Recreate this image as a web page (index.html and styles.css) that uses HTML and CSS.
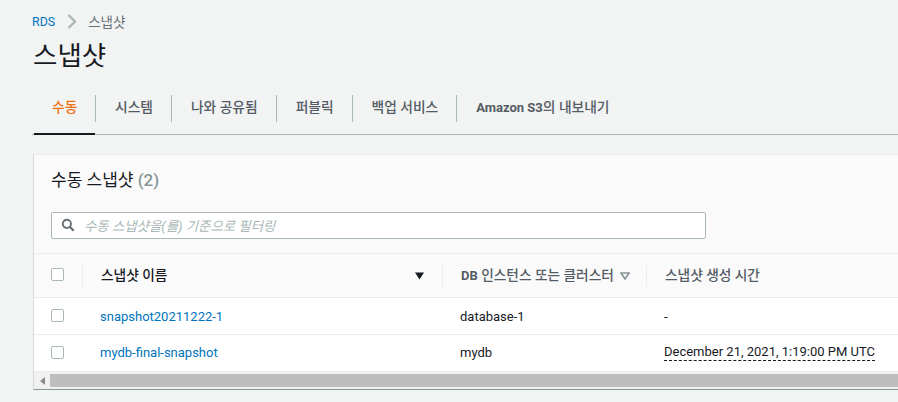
FILE: index.html
```html
<!DOCTYPE html>
<html lang="ko">
<head>
    <meta charset="UTF-8">
    <title>스냅샷</title>
    <link rel="stylesheet" href="styles.css">
</head>
<body>

<nav class="breadcrumb">
    <a href="#">RDS</a>
    <svg class="crumb-arrow" width="10" height="15" viewBox="0 0 10 15"><path d="M1.5 1l6.5 6.5-6.5 6.5" fill="none" stroke="#aab7b8" stroke-width="2.4"/></svg>
    <span>스냅샷</span>
</nav>

<h1 class="page-title">스냅샷</h1>

<div class="tabs">
    <div class="tab active"><span>수동</span></div>
    <div class="tab"><span>시스템</span></div>
    <div class="tab"><span>나와 공유됨</span></div>
    <div class="tab"><span>퍼블릭</span></div>
    <div class="tab"><span>백업 서비스</span></div>
    <div class="tab"><span><b>Amazon S3</b>의 내보내기</span></div>
</div>

<section class="card">
    <div class="card-head">
        <h2>수동 스냅샷 <span class="count">(2)</span></h2>
        <div class="filter">
            <svg width="14" height="14" viewBox="0 0 16 16"><circle cx="6.7" cy="6.7" r="4.7" fill="none" stroke="#687078" stroke-width="2.2"/><path d="M10.2 10.2l4.3 4.3" stroke="#687078" stroke-width="2.6"/></svg>
            <span>수동 스냅샷을(를) 기준으로 필터링</span>
        </div>
    </div>

    <div class="row row-head">
        <div class="cell cell-check"><i class="check"></i></div>
        <div class="cell cell-name">
            <span>스냅샷 이름</span>
            <svg width="9" height="8" viewBox="0 0 10 8"><path d="M0 0h10L5 8z" fill="#16191f"/></svg>
        </div>
        <div class="cell cell-db">
            <span><b>DB</b> 인스턴스 또는 클러스터</span>
            <svg width="10" height="8" viewBox="0 0 10 8"><path d="M1 1h8L5 7z" fill="none" stroke="#879596" stroke-width="1.6"/></svg>
        </div>
        <div class="cell cell-time"><span>스냅샷 생성 시간</span></div>
    </div>

    <div class="row">
        <div class="cell cell-check"><i class="check"></i></div>
        <div class="cell cell-name"><a href="#">snapshot20211222-1</a></div>
        <div class="cell cell-db">database-1</div>
        <div class="cell cell-time">-</div>
    </div>
    <div class="row row-last">
        <div class="cell cell-check"><i class="check"></i></div>
        <div class="cell cell-name"><a href="#">mydb-final-snapshot</a></div>
        <div class="cell cell-db">mydb</div>
        <div class="cell cell-time"><span class="dotted">December 21, 2021, 1:19:00 PM UTC</span></div>
    </div>

    <div class="scrollbar">
        <div class="scroll-left"><svg width="5" height="8" viewBox="0 0 5 8"><path d="M5 0v8L0 4z" fill="#8a8a8a"/></svg></div>
        <div class="scroll-thumb"></div>
    </div>
</section>

</body>
</html>
```

FILE: styles.css
```css
* {
    box-sizing: border-box;
}
body {
    margin: 0;
    height: 402px;
    padding: 13px 0 0 32px;
    overflow: hidden;
    background-color: #f2f3f3;
    color: #16191f;
    font-family: Roboto, "Noto Sans CJK KR", sans-serif;
    font-size: 13px;
}
a {
    color: #0073bb;
    text-decoration: none;
}
.breadcrumb {
    display: flex;
    align-items: center;
    gap: 12px;
    height: 16px;
    font-size: 13.5px;
    color: #687078;
}
.breadcrumb a {
    font-size: 12.4px;
}
.crumb-arrow {
    margin-right: -1px;
}
.page-title {
    margin: 10px 0 0 1px;
    font-size: 26.5px;
    font-weight: 400;
    line-height: 34px;
}
.tabs {
    display: flex;
    height: 40px;
    margin-top: 22px;
    border-bottom: 1px solid #aab7b8;
    font-size: 13.75px;
    white-space: nowrap;
}
.tab {
    height: 39px;
    font-weight: 500;
    color: #545b64;
}
.tab span {
    display: block;
    height: 27px;
    padding: 0 18px 0 19px;
    line-height: 25px;
    border-left: 1px solid #aab7b8;
}
.tab b {
    font-size: 13px;
    font-weight: 700;
}
.tab.active {
    width: 61px;
    height: 40px;
    margin: 0 0 -1px 2px;
    border-bottom: 2px solid #16191f;
    color: #ec7211;
}
.tab.active span {
    padding: 0 18px;
    border-left: none;
}
/* the card runs to the window edge, so it has no right border */
.card {
    height: 236px;
    margin: 19px 0 0 1px;
    border: 1px solid #eaeded;
    border-left-color: #d5dbdb;
    border-right: none;
    border-bottom: 1px solid #879596;
    background-color: #fafafa;
}
.card-head {
    height: 98px;
    padding: 13px 17px 0;
}
.card-head h2 {
    margin: 0;
    font-size: 17px;
    font-weight: 400;
    line-height: 24px;
}
.count {
    color: #879596;
    font-weight: 500;
}
.filter {
    display: flex;
    align-items: center;
    gap: 9px;
    width: 655px;
    height: 27px;
    margin-top: 20px;
    padding: 0 0 2px 9px;
    border: 1px solid #aab7b8;
    border-radius: 2px;
    background-color: #fff;
    font-size: 13.4px;
    font-style: italic;
    color: #aab7b8;
}
.row {
    display: flex;
    height: 37px;
    border-bottom: 1px solid #eaeded;
    background-color: #fff;
}
.row-last .cell-name,
.row-last .cell-db,
.row-last .cell-time {
    padding-bottom: 2px;
}
.row-head {
    height: 45px;
    border-top: 1px solid #eaeded;
    background-color: #fafafa;
    font-size: 13.7px;
    font-weight: 500;
}
.cell {
    display: flex;
    align-items: center;
}
.cell-check {
    width: 48px;
    padding-left: 17px;
}
.cell-name {
    justify-content: space-between;
    width: 360px;
    padding: 0 18px;
}
.cell-db {
    gap: 6px;
    width: 204px;
    padding-left: 18px;
}
.cell-time {
    flex: 1;
    padding-left: 18px;
}
.row-head .cell {
    position: relative;
    color: #545b64;
}
.row-head .cell span {
    margin: 0 0 3px 1px;
}
.row-head .cell-name {
    color: #16191f;
}
.row-head .cell b {
    font-size: 13px;
}
.row-head .cell-name::before,
.row-head .cell-db::before,
.row-head .cell-time::before {
    content: "";
    position: absolute;
    left: 0;
    top: 11px;
    height: 22px;
    border-left: 1px solid #eaeded;
}
.check {
    display: block;
    width: 13px;
    height: 13px;
    margin-bottom: 2px;
    border: 1px solid #aab7b8;
    border-radius: 2px;
    background-color: #fff;
}
.dotted {
    border-bottom: 1px dashed #16191f;
    line-height: 17px;
}
.scrollbar {
    display: flex;
    height: 17px;
    border-top: 2px solid #f1f1f1;
    border-bottom: 2px solid #f1f1f1;
    background-color: #f1f1f1;
}
.scroll-left {
    display: flex;
    align-items: center;
    justify-content: center;
    width: 16px;
}
.scroll-thumb {
    flex: 1;
    background-color: #bebebe;
}
```
